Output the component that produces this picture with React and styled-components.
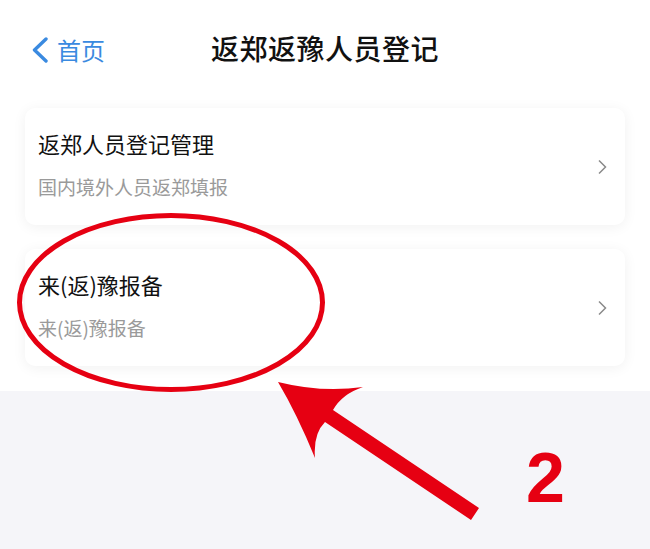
import React from 'react';
import styled, { createGlobalStyle } from 'styled-components';

const GlobalStyle = createGlobalStyle`
    html, body {
        margin: 0;
        padding: 0;
        background: #ffffff;
    }
    body {
        font-family: "Noto Sans CJK SC", "Noto Sans", sans-serif;
    }
`;

const entries = [
    { title: '返郑人员登记管理', subtitle: '国内境外人员返郑填报' },
    { title: '来(返)豫报备', subtitle: '来(返)豫报备' },
];

export default function App() {
    return (
        <Page>
            <GlobalStyle />
            <NavBar>
                <BackLink>
                    <svg width="18" height="26" viewBox="0 0 18 26">
                        <path d="M15 2 L3.5 13 L15 24" fill="none" stroke="#3a8ae0" strokeWidth="3.4" strokeLinecap="round" strokeLinejoin="round" />
                    </svg>
                    <span>首页</span>
                </BackLink>
                <NavTitle>返郑返豫人员登记</NavTitle>
            </NavBar>
            <CardList>
                {entries.map((e) => (
                    <Card key={e.title}>
                        <TextWrapper>
                            <Title>{e.title}</Title>
                            <Subtitle>{e.subtitle}</Subtitle>
                        </TextWrapper>
                        <svg width="10" height="16" viewBox="0 0 10 16">
                            <path d="M2 1.5 L8.5 8 L2 14.5" fill="none" stroke="#8a8a8a" strokeWidth="1.5" />
                        </svg>
                    </Card>
                ))}
            </CardList>
            <Filler />
            <Marks width="650" height="549" viewBox="0 0 650 549">
                <ellipse cx="171" cy="302.5" rx="151.5" ry="87" fill="none" stroke="#e60012" strokeWidth="5" />
                <path
                    d="M278,382 Q322,393 363,387 Q342,394 333,410 L479,508 L471,520 L325,422 Q313,434 315,458 Q297,414 278,382 Z"
                    fill="#e60012"
                />
            </Marks>
            <StepNumber>2</StepNumber>
        </Page>
    );
}

const Page = styled.div`
    position: relative;
    min-height: 100vh;
    display: flex;
    flex-direction: column;
    background: #ffffff;
    overflow: hidden;
`;

const NavBar = styled.div`
    height: 96px;
    position: relative;
    display: flex;
    align-items: center;
    justify-content: center;
`;

const BackLink = styled.div`
    position: absolute;
    left: 31px;
    top: 37px;
    display: flex;
    align-items: center;
    gap: 8px;
    color: #3a8ae0;
    font-size: 24px;
    line-height: 24px;
`;

const NavTitle = styled.div`
    font-size: 28px;
    font-weight: 500;
    color: #111111;
    letter-spacing: 0.5px;
`;

const CardList = styled.div`
    display: flex;
    flex-direction: column;
    gap: 24px;
    padding: 12px 25px 25px 25px;
`;

const Card = styled.div`
    height: 117px;
    box-sizing: border-box;
    padding: 22px 18px 0 13px;
    background: #ffffff;
    border-radius: 10px;
    box-shadow: 0 2px 14px rgba(0, 0, 0, 0.06);
    display: flex;
    justify-content: space-between;

    svg {
        margin-top: 29px;
    }
`;

const TextWrapper = styled.div`
    display: flex;
    flex-direction: column;
    gap: 20px;
`;

const Title = styled.div`
    font-size: 22px;
    line-height: 26px;
    color: #111111;
`;

const Subtitle = styled.div`
    font-size: 19px;
    line-height: 22px;
    color: #9a9a9a;
`;

const Filler = styled.div`
    flex: 1;
    background: #f5f5f9;
`;

const Marks = styled.svg`
    position: absolute;
    left: 0;
    top: 0;
    pointer-events: none;
`;

const StepNumber = styled.span`
    position: absolute;
    left: 526px;
    top: 443px;
    font-family: "Liberation Sans", Arial, sans-serif;
    font-weight: bold;
    font-size: 70px;
    line-height: 70px;
    color: #e60012;
`;
